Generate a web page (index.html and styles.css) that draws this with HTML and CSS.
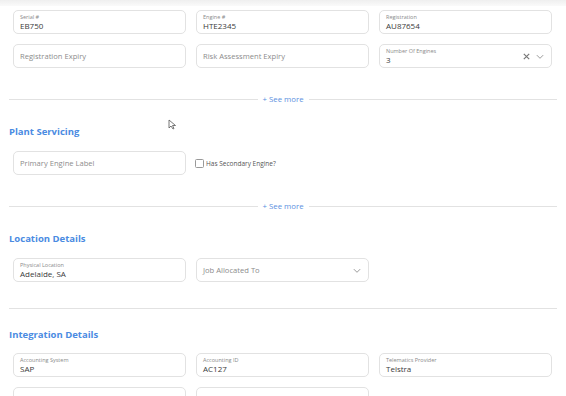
FILE: index.html
```html
<!DOCTYPE html>
<html>
  <head>
    <meta charset="UTF-8">
    <title>Plant Details</title>
    <link rel="stylesheet" href="styles.css">
  </head>
  <body>
    <div class="topbar"></div>
    <div class="page">

      <div class="grid">
        <div class="field"><span class="label">Serial #</span><span class="value">EB750</span></div>
        <div class="field"><span class="label">Engine #</span><span class="value">HTE2345</span></div>
        <div class="field"><span class="label">Registration</span><span class="value">AU87654</span></div>
        <div class="field"><span class="placeholder">Registration Expiry</span></div>
        <div class="field"><span class="placeholder">Risk Assessment Expiry</span></div>
        <div class="field select">
          <div class="select-text"><span class="label">Number Of Engines</span><span class="value">3</span></div>
          <svg class="icon" width="9" height="9" viewBox="0 0 10 10"><path d="M2 2 L8 8 M8 2 L2 8" stroke="#777" stroke-width="1.3" fill="none"/></svg>
          <svg class="icon" width="10" height="9" viewBox="0 0 10 10"><path d="M1.5 3.5 L5 7 L8.5 3.5" stroke="#999" stroke-width="1.1" fill="none"/></svg>
        </div>
      </div>

      <div class="divider"><span>+ See more</span></div>

      <h3 class="section-title plant">Plant Servicing</h3>
      <div class="grid">
        <div class="field"><span class="placeholder">Primary Engine Label</span></div>
        <label class="check"><span class="box"></span>Has Secondary Engine?</label>
      </div>

      <div class="divider second"><span>+ See more</span></div>

      <h3 class="section-title location">Location Details</h3>
      <div class="grid">
        <div class="field"><span class="label">Physical Location</span><span class="value">Adelaide, SA</span></div>
        <div class="field select">
          <div class="select-text"><span class="placeholder">Job Allocated To</span></div>
          <svg class="icon" width="10" height="9" viewBox="0 0 10 10"><path d="M1.5 3.5 L5 7 L8.5 3.5" stroke="#999" stroke-width="1.1" fill="none"/></svg>
        </div>
      </div>

      <div class="divider plain"></div>

      <h3 class="section-title integration">Integration Details</h3>
      <div class="grid">
        <div class="field"><span class="label">Accounting System</span><span class="value">SAP</span></div>
        <div class="field"><span class="label">Accounting ID</span><span class="value">AC127</span></div>
        <div class="field"><span class="label">Telematics Provider</span><span class="value">Telstra</span></div>
        <div class="field"><span class="label">Telematics ID</span><span class="value"></span></div>
        <div class="field"></div>
      </div>

    </div>

    <svg class="cursor" width="9" height="11" viewBox="0 0 9 11"><path d="M1 1 L1 9 L3 7 L5 10 L6 9.5 L4.5 6.5 L7.5 6.5 Z" fill="#fff" stroke="#555" stroke-width="0.8"/></svg>
  </body>
</html>
```

FILE: styles.css
```css
body {
  margin: 0;
  background: #fff;
  font-family: "Open Sans", "Liberation Sans", sans-serif;
  color: #333;
  overflow: hidden;
}

.topbar {
  height: 6px;
  background: linear-gradient(#efefef, #fafafa);
}

.page {
  padding: 4px 9px 0 9px;
  width: 548px;
}

.grid {
  display: grid;
  grid-template-columns: repeat(3, 1fr);
  column-gap: 10px;
  row-gap: 10px;
  padding: 0 5px 0 4px;
}

.field {
  height: 24px;
  box-sizing: border-box;
  border: 1px solid #e2e2e2;
  border-radius: 5px;
  padding: 0 6px;
  display: flex;
  flex-direction: column;
  justify-content: center;
}

.label {
  font-size: 5.5px;
  color: #8a8a8a;
  line-height: 7px;
}

.value {
  font-size: 8px;
  color: #3a3a3a;
  line-height: 10px;
}

.placeholder {
  font-size: 7.6px;
  color: #8c8c8c;
}

.select {
  flex-direction: row;
  align-items: center;
  gap: 4px;
}

.select-text {
  flex: 1;
  display: flex;
  flex-direction: column;
}

.icon {
  display: block;
}

.check {
  display: flex;
  align-items: center;
  font-size: 6.5px;
  color: #555;
  gap: 2px;
  margin-left: -1px;
}

.box {
  width: 7px;
  height: 7px;
  border: 1px solid #999;
  border-radius: 1.5px;
}

.divider {
  display: flex;
  align-items: center;
  gap: 5px;
  margin-top: 26px;
  height: 10px;
}

.divider::before,
.divider::after {
  content: "";
  flex: 1;
  border-top: 1px solid #e2e2e2;
}

.divider span {
  font-size: 7.8px;
  color: #5a8fe0;
}

.divider.second {
  margin-top: 26px;
}

.divider.plain {
  margin-top: 21px;
  gap: 0;
}

.section-title {
  margin: 0;
  font-size: 9.5px;
  font-weight: 700;
  color: #4a8be2;
  height: 14px;
  line-height: 14px;
}

.plant {
  margin-top: 21px;
  margin-bottom: 12px;
}

.location {
  margin-top: 21px;
  margin-bottom: 12px;
}

.integration {
  margin-top: 15px;
  margin-bottom: 11px;
}

.cursor {
  position: absolute;
  left: 168px;
  top: 119px;
}
```
